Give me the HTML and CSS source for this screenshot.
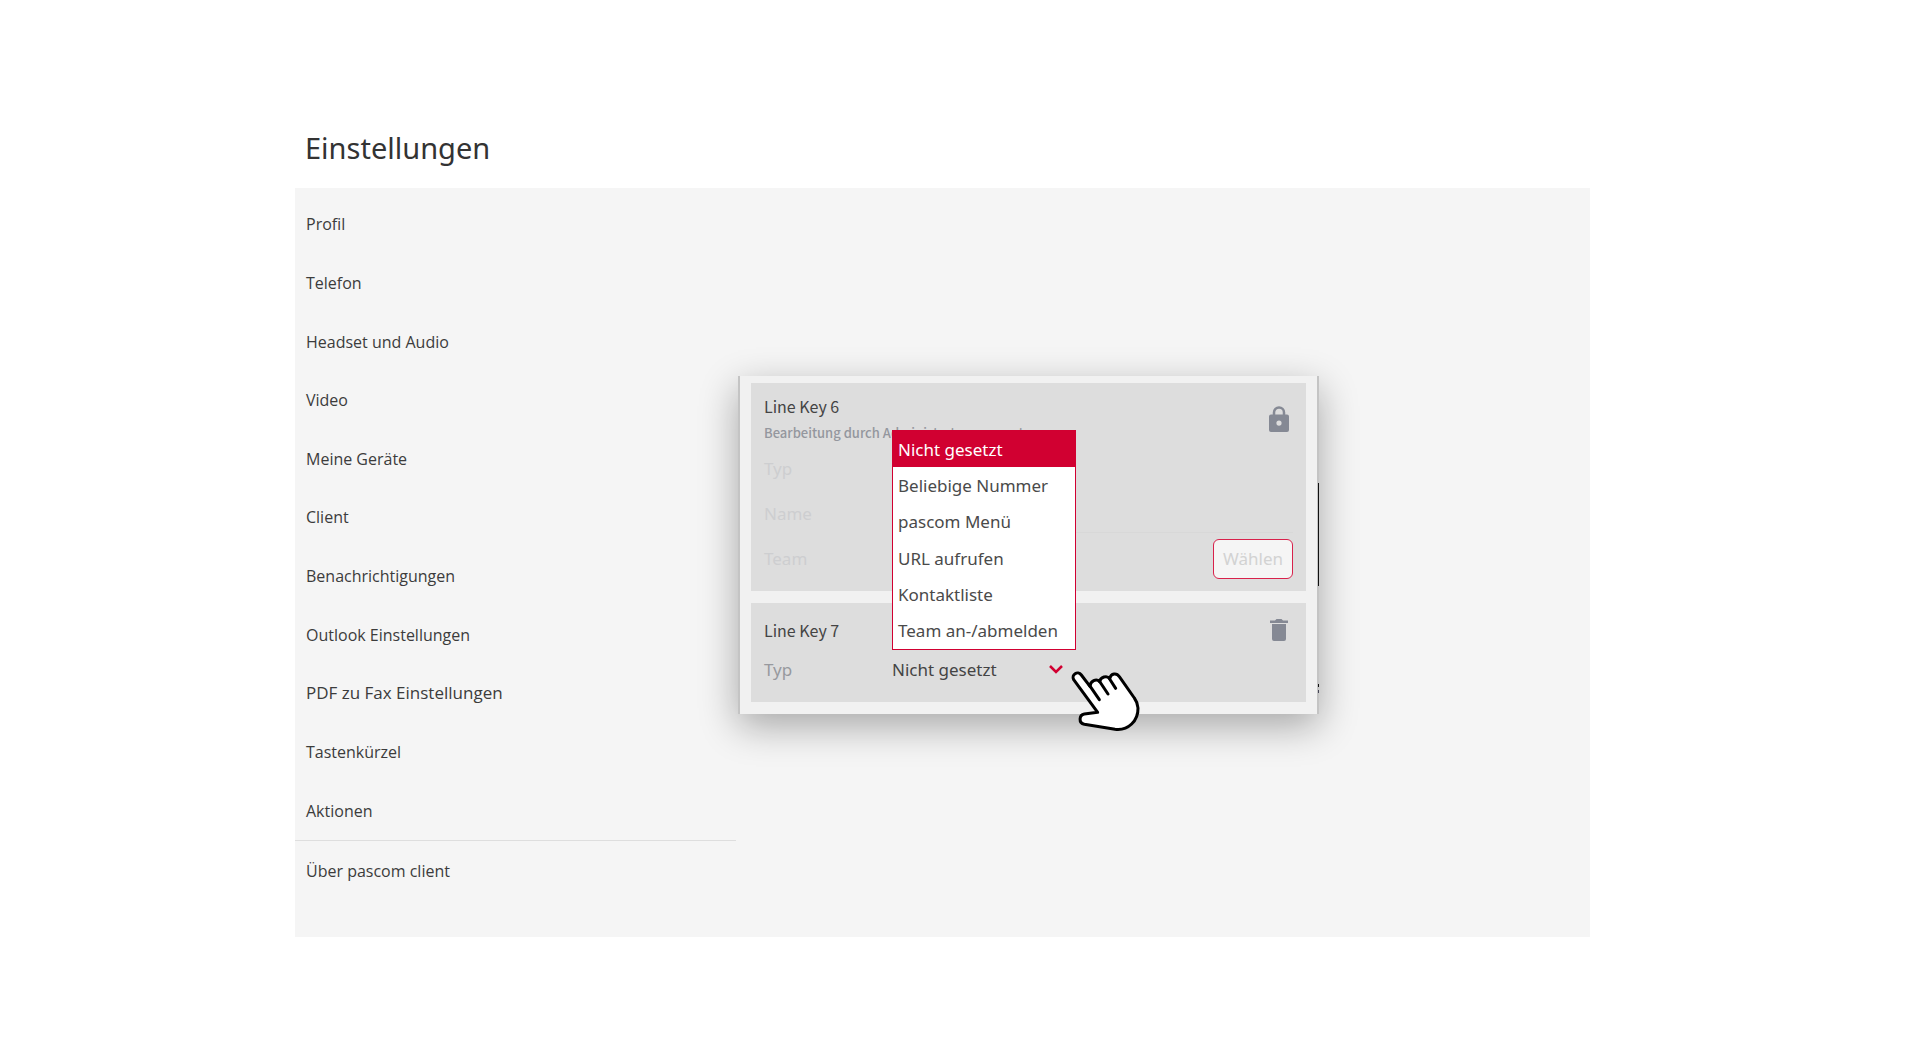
FILE: index.html
```html
<!DOCTYPE html>
<html lang="de">
<head>
<meta charset="utf-8">
<title>Einstellungen</title>
<meta name="viewport" content="width=device-width, initial-scale=1">
<link rel="stylesheet" href="styles.css">
</head>
<body>
<div class="page">
  <h1 class="page-title">Einstellungen</h1>
  <div class="panel">
    <nav class="nav">
      <ul class="nav-list">
        <li><a class="nav-link" href="#profil">Profil</a></li>
        <li><a class="nav-link" href="#telefon">Telefon</a></li>
        <li><a class="nav-link" href="#headset">Headset und Audio</a></li>
        <li><a class="nav-link" href="#video">Video</a></li>
        <li><a class="nav-link" href="#geraete">Meine Geräte</a></li>
        <li><a class="nav-link" href="#client">Client</a></li>
        <li><a class="nav-link" href="#benachrichtigungen">Benachrichtigungen</a></li>
        <li><a class="nav-link" href="#outlook">Outlook Einstellungen</a></li>
        <li><a class="nav-link nav-link-large" href="#fax">PDF zu Fax Einstellungen</a></li>
        <li><a class="nav-link" href="#tasten">Tastenkürzel</a></li>
        <li><a class="nav-link" href="#aktionen">Aktionen</a></li>
      </ul>
      <a class="nav-link nav-about" href="#ueber">Über pascom client</a>
    </nav>

    <main class="content">
      <div class="keys">
        <section class="card card-locked">
          <header class="card-head">
            <div>
              <h2 class="card-title">Line Key 6</h2>
              <p class="card-note">Bearbeitung durch Administrator gesperrt</p>
            </div>
            <svg class="icon icon-lock" viewBox="0 0 20 26" aria-hidden="true">
              <path class="lock-shackle" d="M5 10V6.500a5 5 0 0 1 10 0V10"/>
              <path fill-rule="evenodd" d="M2 8.500h16a2 2 0 0 1 2 2V24a2 2 0 0 1-2 2H2a2 2 0 0 1-2-2V10.500a2 2 0 0 1 2-2zM10 14.500a2.600 2.600 0 1 0 0 5.200a2.600 2.600 0 0 0 0-5.200z"/>
            </svg>
          </header>
          <div class="row"><span class="label">Typ</span></div>
          <div class="row">
            <label class="label" for="key6-name">Name</label>
            <input class="text-input" id="key6-name" type="text" disabled>
          </div>
          <div class="row">
            <span class="label">Team</span>
            <button class="choose" type="button" disabled>Wählen</button>
          </div>
        </section>

        <section class="card card-open">
          <header class="card-head">
            <h2 class="card-title">Line Key 7</h2>
            <svg class="icon icon-trash" viewBox="0 0 20 22" aria-hidden="true">
              <path d="M1 1.500h5L7.500 0h5L14 1.500h5v2.500H1zM3 5h14v15a2 2 0 0 1-2 2H5a2 2 0 0 1-2-2z"/>
            </svg>
          </header>
          <div class="row">
            <label class="label" for="key7-type">Typ</label>
            <div class="field">
              <select class="select" id="key7-type">
                <option>Nicht gesetzt</option>
                <option>Beliebige Nummer</option>
                <option>pascom Menü</option>
                <option>URL aufrufen</option>
                <option>Kontaktliste</option>
                <option>Team an-/abmelden</option>
              </select>
              <svg class="chevron" viewBox="0 0 14 10" aria-hidden="true"><path d="M1 2l6 6 6-6"/></svg>
              <div class="menu" role="listbox" aria-label="Typ">
                <button class="menu-item is-selected" type="button" role="option" aria-selected="true">Nicht gesetzt</button>
                <button class="menu-item" type="button" role="option">Beliebige Nummer</button>
                <button class="menu-item" type="button" role="option">pascom Menü</button>
                <button class="menu-item" type="button" role="option">URL aufrufen</button>
                <button class="menu-item" type="button" role="option">Kontaktliste</button>
                <button class="menu-item" type="button" role="option">Team an-/abmelden</button>
              </div>
              <svg class="hand" viewBox="0 0 270 240" aria-hidden="true">
                <path d="M26 62C18 48 38 33 49 48L75 82C76 66 94 57 104 68C106 54 126 48 134 59C138 42 155 41 163 53L208 117C214 125 218 135 219 147C220 185 190 216 150 211L58 196C40 192 42 168 58 165L98 160Z"/>
                <path d="M72 77L103 122M103 66L129 105M132 57L152 88"/>
              </svg>
            </div>
          </div>
        </section>
        <span class="edge-bar"></span>
        <span class="edge-dots"></span>
      </div>
    </main>
  </div>
</div>
</body>
</html>
```
FILE: styles.css
```css
* { box-sizing: border-box; }

body {
  margin: 0;
  background: #fff;
  color: #444;
  font-family: "Noto Sans", "Open Sans", sans-serif;
  font-size: 17px;
}

h1, h2, p, ul { margin: 0; padding: 0; font-weight: 400; }
ul { list-style: none; }

.page { padding: 130px 330px 103px 295px; }

.page-title {
  padding-left: 10px;
  margin-bottom: 22px;
  font: 29px/36px "Noto Sans", "Open Sans", sans-serif;
  color: #333;
}

.panel {
  display: grid;
  grid-template-columns: 441px 1fr;
  min-height: 749px;
  background: #f5f5f5;
}

/* navigation */
.nav { padding-top: 7px; }

.nav-list {
  display: grid;
  grid-auto-rows: 1fr;
  min-height: 646px;
  border-bottom: 1px solid #dedede;
}

.nav-list li { display: flex; }

.nav-link {
  display: flex;
  flex: 1;
  align-items: center;
  padding-left: 11px;
  color: #3c3c3c;
  font: 16px/24px "Open Sans", "Noto Sans", sans-serif;
  text-decoration: none;
}

.nav-link-large { font-size: 17px; }
.nav-about { min-height: 60px; }

/* line key window */
.content { padding: 188px 271px 0 2px; }

.keys {
  position: relative;
  display: flex;
  flex-direction: column;
  gap: 12px;
  padding: 7px 11px 12px;
  background: #f1f1f1;
  border: solid #c4c4c4;
  border-width: 0 2px;
  box-shadow: 0 12px 36px rgba(0, 0, 0, 0.32);
}

.card { padding: 9px 13px 10px; background: #ddd; }
.card-open { padding: 8px 13px 13px; }

.card-head {
  display: flex;
  align-items: center;
  justify-content: space-between;
  padding-right: 4px;
}

.card-open .card-head { min-height: 38px; }

.card-title { font: 16px/28px "Noto Sans CJK SC", sans-serif; }
.card-note { font: 500 13px/26px "Noto Sans CJK SC", sans-serif; color: #94979e; }

.icon { width: 20px; fill: #858994; }
.icon-lock { height: 26px; }
.icon-trash { height: 22px; }
.lock-shackle { fill: none; stroke: #858994; stroke-width: 2.5; }

.row { display: flex; align-items: center; min-height: 45px; }
.card-open .row { min-height: 40px; }

.label { flex: 0 0 128px; color: #97999e; }
.card-locked .label { color: #cdced0; }

.text-input {
  flex: 1;
  min-width: 0;
  height: 38px;
  padding: 0;
  border: 0;
  border-bottom: 1px solid #d8d8d8;
  background: none;
  font: inherit;
}

.choose {
  margin-left: auto;
  height: 40px;
  padding: 0 9px;
  border: 1px solid #d8214b;
  border-radius: 6px;
  background: #f5f5f5;
  color: #d2d2d2;
  font: inherit;
}

.field {
  position: relative;
  display: flex;
  align-items: center;
  width: 184px;
  height: 40px;
}

.select {
  flex: 1;
  height: 40px;
  padding: 0;
  border: 0;
  appearance: none;
  background: none;
  color: #444;
  font: inherit;
}

.chevron {
  position: absolute;
  right: 13px;
  width: 14px;
  height: 10px;
  fill: none;
  stroke: #d10031;
  stroke-width: 2.5;
}

.menu {
  position: absolute;
  bottom: 39px;
  left: 0;
  display: grid;
  grid-auto-rows: 1fr;
  width: 184px;
  height: 220px;
  border: 1px solid #d10031;
  background: #fff;
}

.menu-item {
  padding: 0 5px;
  border: 0;
  background: none;
  color: #4a4a4a;
  font: inherit;
  text-align: left;
  white-space: nowrap;
}

.menu-item.is-selected { background: #d10031; color: #fff; }

.hand {
  position: absolute;
  top: 10px;
  left: 173px;
  width: 90px;
  height: 80px;
  fill: #fff;
  stroke: #000;
  stroke-width: 9;
  stroke-linecap: round;
  stroke-linejoin: round;
}

/* pieces of the window behind, visible at the right edge */
.edge-bar, .edge-dots { position: absolute; right: -2px; width: 1px; background: #111; }
.edge-bar { top: 107px; height: 103px; }
.edge-dots { top: 308px; height: 3px; box-shadow: 0 6px #445; }
```
